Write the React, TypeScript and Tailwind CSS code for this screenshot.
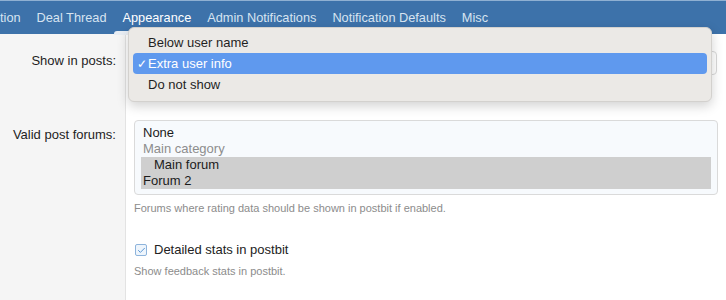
import { Check } from 'lucide-react';

const tabs = ['tion', 'Deal Thread', 'Appearance', 'Admin Notifications', 'Notification Defaults', 'Misc'];

function Label({ children, className = '' }: { children: React.ReactNode; className?: string }) {
  return (
    <div
      className={`w-[126px] shrink-0 bg-[#f5f5f5] border-r border-[#e3e3e3] pr-[9px] text-right text-[13px] text-[#1e1e1e] ${className}`}
    >
      {children}
    </div>
  );
}

export default function App() {
  return (
    <div className="relative h-[300px] w-[726px] overflow-hidden bg-white font-['Liberation_Sans',Helvetica,Arial,sans-serif]">
      {/* tab bar */}
      <div className="flex h-[34px] items-center gap-4 border-t border-[#8fb0d2] bg-[#3d72aa] text-[12.75px] text-[#d7e4f1]">
        {tabs.map((t) => (
          <div
            key={t}
            className={`relative ${t === 'tion' ? 'ml-0' : ''} ${t === 'Appearance' ? 'text-white' : ''}`}
          >
            {t}
            {t === 'Appearance' && (
              <div className="absolute left-[-9px] right-[-9px] top-[23px] h-[4px] rounded-t-[3px] bg-[#e9eef4]" />
            )}
          </div>
        ))}
      </div>

      {/* rows */}
      <div className="flex">
        <Label className="pt-[19px] pb-[17px]">
          <div className="leading-[16px]">Show in posts:</div>
        </Label>
        <div className="flex-1 pl-[8px] pr-[9px] pt-[17px]">
          <div className="flex h-[24px] items-center justify-end rounded-[4px] border border-[#d9d9d9] bg-white pr-[2px] text-[9px] leading-none text-[#333]">
            ⇕
          </div>
        </div>
      </div>

      <div className="flex">
        <Label className="pt-[41px] pb-[200px]">
          <div className="leading-[16px]">Valid post forums:</div>
        </Label>
        <div className="flex-1 pl-[8px] pr-[8px] pt-[34px]">
          <div className="rounded-[4px] border border-[#dadada] bg-[#f7fafd] px-[6px] pb-[5px] pt-[4px] text-[13px] leading-[16px] text-[#1b1b1b]">
            <div className="pl-[2px]">None</div>
            <div className="pl-[2px] text-[#8d8d8d]">Main category</div>
            <div className="bg-[#cfcfcf] pl-[13px]">Main forum</div>
            <div className="bg-[#cfcfcf] pl-[2px]">Forum 2</div>
          </div>
          <div className="mt-[7px] text-[11px] leading-[13px] text-[#8c8c8c]">
            Forums where rating data should be shown in postbit if enabled.
          </div>

          <div className="mt-[27px] flex items-center gap-[7px] pl-[1px]">
            <div className="flex h-[12px] w-[12px] items-center justify-center rounded-[2px] border border-[#8eb4dc] bg-[#eef5fc]">
              <Check size={9} strokeWidth={2.5} className="text-[#4f8fd0]" />
            </div>
            <div className="text-[13px] leading-[16px] text-[#222]">Detailed stats in postbit</div>
          </div>
          <div className="mt-[7px] text-[11px] leading-[13px] text-[#8c8c8c]">Show feedback stats in postbit.</div>
        </div>
      </div>

      {/* open native select menu */}
      <div className="absolute left-[128px] top-[27px] w-[584px] rounded-[6px] border border-[#d3d1ce] bg-[#ebe9e6] px-[4px] pb-[6px] pt-[4px] text-[13px] text-[#1f1f1f] shadow-[0_4px_12px_rgba(0,0,0,0.18)]">
        <div className="flex h-[21px] items-center pl-[15px]">Below user name</div>
        <div className="flex h-[21px] items-center rounded-[4px] bg-[#5f99ee] pl-[4px] text-white">
          <span className="w-[11px] text-[12px]">✓</span>
          Extra user info
        </div>
        <div className="flex h-[21px] items-center pl-[15px]">Do not show</div>
      </div>
    </div>
  );
}
